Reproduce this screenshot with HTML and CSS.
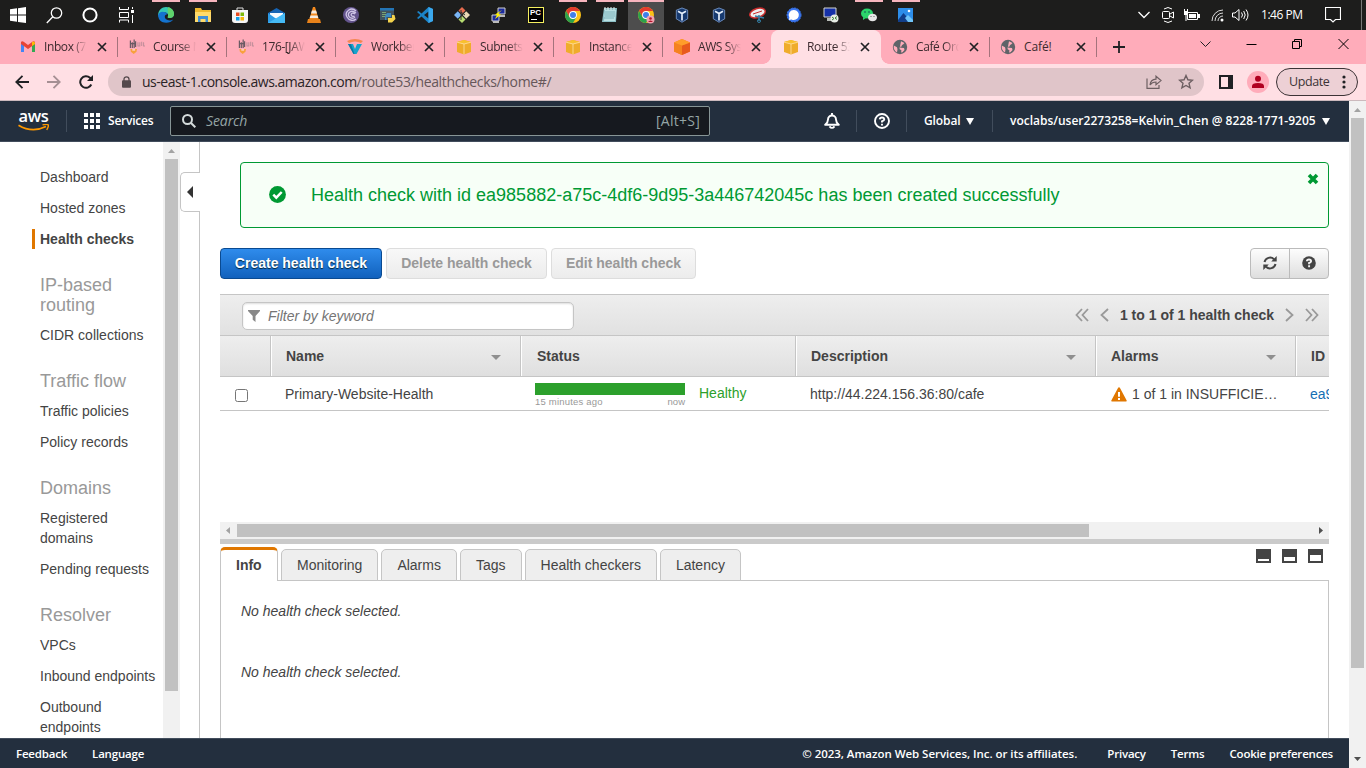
FILE: index.html
```html
<!DOCTYPE html>
<html lang="en">
<head>
<meta charset="utf-8">
<title>Route 53 Console</title>
<link rel="stylesheet" href="styles.css">
</head>
<body>
<svg class="defs" aria-hidden="true">
  <defs>
    <symbol id="cube" viewBox="0 0 16 16"><path d="M1 3 8 1l7 2v10L8 15.500 1 13z" fill="#efac2b"/><path d="M1 3 8 5l7-2L8 1z" fill="#f9c02d"/><path d="M1 3.200 8 5l7-1.800M8 5v10.500" stroke="#ffdc9a" stroke-width=".9" fill="none"/></symbol>
    <symbol id="globe" viewBox="0 0 16 16"><circle cx="8" cy="8" r="7.200" fill="#5f6368"/><path d="M9 2.300 12.500 4l-1.500 1.500-1 .5-.5 1.500-2.500.5 2 .7 3 .3.500 2-2 2.300-1.500.3.500-2-2-1.600zM1.800 6.500 5 8.300l.5 2-.5 3.200A7 7 0 0 1 1.800 6.500z" fill="#ffacba"/></symbol>
    <symbol id="x" viewBox="0 0 10 10"><path d="M1 1l8 8M9 1l-8 8" stroke="#202124" stroke-width="1.700"/></symbol>
    <symbol id="canvas" viewBox="0 0 17 16"><path d="M1.500 1v8M3.500 3v6M5.500 0v9M7 2v6M1 4.500h6" stroke="#6b5a63" stroke-width="1.300"/><path d="M9.500 3v4h2V3M13.500 2.500V7M15.500 3v4h1.500" stroke="#c08d99" stroke-width="1.100" fill="none"/><path d="M1.500 10h7l-.5 3-3 2.500-3-2.500z" fill="#f8a03c"/><path d="M3.500 10h3v2h-3z" fill="#ffc8bb"/></symbol>
    <symbol id="chrome" viewBox="0 0 16 16"><circle cx="8" cy="8" r="8" fill="#fbc116"/><path d="M1.100 4A8 8 0 0 1 15 4H8L4.600 10z" fill="#e33b2e"/><path d="M1.100 4A8 8 0 0 0 8 16l3.500-6L8 11.500 4.500 10z" fill="#2ba24c"/><circle cx="8" cy="8" r="3.900" fill="#fff"/><circle cx="8" cy="8" r="3" fill="#3f7fe8"/></symbol>
    <symbol id="vbox" viewBox="0 0 16 16"><path d="M2 3 8 .500 14 3v9l-6 3.700L2 12z" fill="#173a70"/><path d="M2.300 3.200 8 1l5.700 2.200v8.600L8 15.200l-5.700-3.400z" fill="none" stroke="#8fabd2" stroke-width=".7"/><path d="M4 4.300 8 6.500l4-2.200M8 6.500v7" stroke="#e5effb" stroke-width="1.700" fill="none"/></symbol>
  </defs>
</svg>

<header class="taskbar">
  <div class="start">
    <span><svg width="16" height="16"><path d="M0 2.300 7 1.300V7.500H0zM8 1.200 16 0v7.500H8zM0 8.500h7v6.200L0 13.700zM8 8.500h8V16L8 14.900z" fill="#fff"/></svg></span>
    <span><svg width="17" height="17" fill="none" stroke="#fff" stroke-width="1.300"><circle cx="10.500" cy="6" r="5.200"/><path d="M6.800 9.800.8 16"/></svg></span>
    <span><svg width="16" height="16"><circle cx="8" cy="8" r="6.600" fill="none" stroke="#fff" stroke-width="2"/></svg></span>
    <span><svg width="17" height="16" fill="none" stroke="#fff"><path d="M1.500 0v2.500h9V0M1.500 15.500v-2.500h9v2.500M1.500 5.500h9v5h-9zM14.500 0v2M14.500 8v8"/><path d="M13 3h3v3h-3z" fill="#fff" stroke="none"/></svg></span>
  </div>
  <div class="apps">
    <span class="open"><svg width="16" height="16"><path d="M0 9C0 3 4 0 8 0c5 0 8 3.500 8 7 0 3-2.500 4-4.500 4-2 0-2-.8-1.600-1.500C11 7 8.500 5 6 5.500 3 6 1 7.500 0 9z" fill="#36c6b4"/><path d="M10 .3C14 1 16 4 16 7c0 3-2.500 4-4.500 4-2 0-2-.8-1.600-1.500C11 7 9 5 10 .3z" fill="#60d36b"/><path d="M0 9c0-4 6-6 9.500-1.800C6 7 5 13 12 13.500c1.500 0 2.500-.4 3.300-.9C12 17 4 17 1 12z" fill="#1473cf"/></svg></span>
    <span class="open"><svg width="16" height="14"><path d="M0 0h6l1 2h9v12H0z" fill="#efb82f"/><path d="M0 4h16v10H0z" fill="#ffda6b"/><path d="M3 8h10v6h-2.500v-3h-5v3H3z" fill="#3f8fd8"/></svg></span>
    <span><svg width="16" height="16"><path d="M5 3V1h6v2" fill="none" stroke="#ddd"/><path d="M0 3h16v10q0 3-3 3H3q-3 0-3-3z" fill="#f5f5f5"/><path d="M4 5.500h3.500V9H4z" fill="#e84c22"/><path d="M8.500 5.500H12V9H8.500z" fill="#7cb908"/><path d="M4 10h3.500v3.500H4z" fill="#14a0e8"/><path d="M8.500 10H12v3.500H8.500z" fill="#f5b60b"/></svg></span>
    <span><svg width="17" height="15"><path d="M0 5 8.500 0 17 5v10H0z" fill="#1664b4"/><path d="M2 5h13v4l-6.500 2L2 9z" fill="#f5fafe"/><path d="M0 5l8.500 6L17 5v10H0z" fill="#2c9be6"/><path d="M0 15 17 5v10z" fill="#45baf5"/></svg></span>
    <span><svg width="14" height="16"><path d="M6 0h2l4 13H2z" fill="#f58a1d"/><path d="M5 3.500h4l1 3H4zM3.500 8.500h7l.8 2.500H2.700z" fill="#f7ece0"/><path d="M1 12h12l1 4H0z" fill="#e8821a"/></svg></span>
    <span><svg width="16" height="16"><circle cx="8" cy="8" r="8" fill="#63548c"/><path d="M13 4C8-1 1 5 4 10c2 4 7 4 9 2M13 6C8 2 4 6 6 9.500c1.500 2.500 5 2 6 .5M12 7C9 5 7.500 7 8.500 8.700c.8 1 2.500.8 3 .1" fill="none" stroke="#cfc6e6" stroke-width="1.300"/></svg></span>
    <span><svg width="16" height="16"><path d="M0 1h14v12H0z" fill="#41525e"/><path d="M0 1h14v2.500H0z" fill="#2475b5"/><path d="M2 5.500h4M2 7.500h6M2 9.500h4" stroke="#79a574"/><path d="M7 6h4v4H6.500V13H5V9z" fill="#3d87be"/><path d="M12 8h2.500l1 4-3.500 3.500H8V11h4z" fill="#f4d34c"/></svg></span>
    <span><svg width="16" height="16"><path d="M11.500 0 16 2v12l-4.500 2L4.500 9.500 1.500 12 0 11l3.300-3L0 5l1.500-1 3 2.500z" fill="#1b83c7"/><path d="M11.500 4.500 7 8l4.500 3.500z" fill="#1c1c1c"/><path d="M11.500 0 16 2v12l-4.500 2z" fill="#3ba8ed"/></svg></span>
    <span><svg width="16" height="16"><path d="M8 0l3.500 3.500L8 7 4.500 3.500z" fill="#e56b4e"/><path d="M3.800 4.200 7.300 8l-3.500 3.700L0 8z" fill="#7bb6f5"/><path d="M12.200 4.200 16 8l-3.800 3.700L8.700 8z" fill="#e9d8b5"/><path d="M8 9l3.500 3.500L8 16l-3.500-3.500z" fill="#b7dd71"/><path d="M7 3v10M7 5l4 3" stroke="#333" fill="none"/></svg></span>
    <span><svg width="16" height="16"><path d="M7 1h7v6H7zM1 8h7v6H1z" fill="#1d2c9e" stroke="#cfcfcf"/><path d="M8 8h6v2H8zM2 14h6v2H2z" fill="#bbb"/><path d="M11 3 7 7l3 .5L4 12l2-4-2-.5z" fill="#fff200"/></svg></span>
    <span><span class="pycharm">PC</span></span>
    <span class="open"><svg width="16" height="16"><use href="#chrome"/></svg></span>
    <span class="open"><svg width="16" height="16"><path d="M2 1h13l-1 14H0z" fill="#8dbfc6"/><path d="M3 3h11l-1 11H2z" fill="#b9e0e2"/><path d="M3 5h10M3 7h10M3 9h10M2 11h10" stroke="#659fab" stroke-width=".7"/><path d="M3 0v3M6 0v3M9 0v3M12 0v3" stroke="#e9ece9"/></svg></span>
    <span class="open active"><svg width="17" height="17"><use href="#chrome" width="16" height="16"/><circle cx="12.500" cy="12.500" r="4" fill="#f1a1ae"/><circle cx="12.500" cy="11.500" r="1.300" fill="#b3132b"/><path d="M10 15q2.500-3 5 0z" fill="#b3132b"/></svg></span>
    <span class="vb"><svg width="16" height="16"><use href="#vbox"/></svg></span>
    <span class="vb"><svg width="16" height="16"><use href="#vbox"/></svg></span>
    <span><svg width="17" height="16"><ellipse cx="8.500" cy="6" rx="8" ry="4.500" transform="rotate(-18 8.500 6)" fill="#efeeee" stroke="#c92d2d" stroke-width="1.500"/><path d="M4 7l9-3" stroke="#c92d2d"/><path d="M6 9l9 2M10 8v6" stroke="#347fa5" stroke-width="1.500"/><circle cx="10" cy="14" r="1.500" fill="none" stroke="#347fa5"/></svg></span>
    <span class="sg"><svg width="16" height="16"><circle cx="8" cy="8" r="7" fill="#3a76f0" stroke="#3a76f0" stroke-dasharray="2 1"/><path d="M8 3a5 5 0 1 1-2.500 9.400L2.800 13l.6-2.600A5 5 0 0 1 8 3z" fill="#fff"/></svg></span>
    <span class="sg"><svg width="16" height="16"><path d="M1 1h12v9H1z" fill="#1631a8" stroke="#d4d6cf"/><path d="M4 11h5v3H4z" fill="#b9bdb8"/><circle cx="11.500" cy="11.500" r="4" fill="#e8ece5"/><path d="M9 10l2 1.500L9 13M14 9.500l-2 1.500 2 1.500" stroke="#37823a" fill="none"/></svg></span>
    <span class="open"><svg width="16" height="14"><ellipse cx="6" cy="5.500" rx="6" ry="5" fill="#2bd46b"/><path d="M2 9v3l3-2z" fill="#2bd46b"/><ellipse cx="11.500" cy="9.500" rx="4.500" ry="3.800" fill="#e7e7e7"/><circle cx="4" cy="4" r=".8" fill="#145"/><circle cx="8" cy="4" r=".8" fill="#145"/><circle cx="10" cy="8.500" r=".6" fill="#555"/><circle cx="13" cy="8.500" r=".6" fill="#555"/></svg></span>
    <span class="open"><svg width="15" height="14"><path d="M0 0h15v14H0z" fill="#2d8eea"/><path d="M0 12 5.500 5 13 14H0z" fill="#123f8a"/><path d="M7 10l3-3 5 5v2h-5z" fill="#70c5fa"/><circle cx="11" cy="3" r="1.300" fill="#fff"/></svg></span>
  </div>
  <div class="tray">
    <svg width="12" height="8"><path d="M.5 1 6 6.500 11.500 1" fill="none" stroke="#fff" stroke-width="1.300"/></svg>
    <svg width="12" height="16" fill="none" stroke="#fff"><path d="M2 2q4-3 8 0M2 14q4 3 8 0"/><rect x=".5" y="4.500" width="7" height="7" rx="1"/><path d="M8 7l3.500-2v6L8 9" /></svg>
    <svg width="17" height="13"><path d="M4.500 3.500h10v7h-10z" fill="none" stroke="#fff"/><path d="M6 5h7v4H6zM15 5h2v4h-2zM1 2h4v4H1zM1 0h1v2H1zM4 0h1v2H4zM2.500 6h1v6h-1z" fill="#fff"/></svg>
    <svg width="13" height="13" fill="none" stroke="#d8d8d8"><path d="M1 12A11 11 0 0 1 12 1M4 12a8 8 0 0 1 8-8M7 12a5 5 0 0 1 5-5"/><circle cx="11" cy="11" r="1.500" fill="#fff" stroke="none"/></svg>
    <svg width="17" height="14" fill="none" stroke="#fff"><path d="M.5 5h2.500L7 1.500v11L3 9H.5zM9.500 4.500q2 2.500 0 5M11.700 3q3 4 0 8M14 1.500q4 5.500 0 11"/></svg>
    <span class="clock">1:46 PM</span>
    <svg class="note" width="16" height="16"><path d="M.5.500h15v12h-5L8 15l-2.500-2.500h-5z" fill="none" stroke="#fff" stroke-width="1.200"/></svg>
    <i class="peek"></i>
  </div>
</header>

<nav class="tabstrip">
  <div class="tab"><svg width="16" height="16"><path d="M1 13V3l3 2v8z" fill="#4385f4"/><path d="M12 5l3-2v10h-3z" fill="#34a853"/><path d="M1 3q1-1.500 3 0l4 3 4-3q2-1.500 3 0v2L8 10 1 5z" fill="#e94335"/><path d="M12 3q3-1.500 3 2l-3 2z" fill="#fbbc04"/></svg><b>Inbox (7</b><svg class="close"><use href="#x"/></svg></div>
  <div class="tab"><svg width="17" height="16"><use href="#canvas"/></svg><b>Course M</b><svg class="close"><use href="#x"/></svg></div>
  <div class="tab"><svg width="17" height="16"><use href="#canvas"/></svg><b>176-[JAW</b><svg class="close"><use href="#x"/></svg></div>
  <div class="tab"><svg width="16" height="16"><path d="M0 2q8-4 16 0l-2 2q-6-3-12 0z" fill="#f58550"/><path d="M1 5h5l2 5 2-5h5L9.500 15h-3z" fill="#18a3cc"/><path d="M1 5h3l3.500 10h-1z" fill="#0b78a5"/></svg><b>Workben</b><svg class="close"><use href="#x"/></svg></div>
  <div class="tab"><svg width="16" height="16"><use href="#cube"/></svg><b>Subnets</b><svg class="close"><use href="#x"/></svg></div>
  <div class="tab"><svg width="16" height="16"><use href="#cube"/></svg><b>Instance</b><svg class="close"><use href="#x"/></svg></div>
  <div class="tab last"><svg width="16" height="16"><path d="M0 3.500 8 0l8 3.500v9L8 16l-8-3.500z" fill="#f58220"/><path d="M0 3.500 8 6.500V16l-8-3.500z" fill="#f58220"/><path d="M8 6.500l8-3v9L8 16z" fill="#e8591c"/><path d="M0 3.500 8 0l8 3.500-8 3z" fill="#ff9d2a"/></svg><b>AWS Sys</b><svg class="close"><use href="#x"/></svg></div>
  <div class="tab current"><svg width="16" height="16"><use href="#cube"/></svg><b>Route 53</b><svg class="close"><use href="#x"/></svg></div>
  <div class="tab"><svg width="16" height="16"><use href="#globe"/></svg><b>Café Ord</b><svg class="close"><use href="#x"/></svg></div>
  <div class="tab"><svg width="16" height="16"><use href="#globe"/></svg><b>Café!</b><svg class="close"><use href="#x"/></svg></div>
  <svg class="plus" width="12" height="12"><path d="M6 0v12M0 6h12" stroke="#202124" stroke-width="1.800"/></svg>
  <div class="winctl">
    <svg width="11" height="12"><path d="M.5 3.500l5 5 5-5" fill="none" stroke="#202124"/></svg>
    <svg width="11" height="12"><path d="M.5 6.500h10" stroke="#000"/></svg>
    <svg width="11" height="12" fill="none" stroke="#000"><path d="M.5 3.500h7v7h-7zM2.500 3.500v-2h7v7h-2"/></svg>
    <svg width="11" height="12"><path d="M.5 1l10 10M10.500 1l-10 10" stroke="#000"/></svg>
  </div>
</nav>

<div class="toolbar">
  <svg width="14" height="14" fill="none" stroke="#202124" stroke-width="1.800"><path d="M14 7H1.500M7.500.8 1.300 7l6.200 6.200"/></svg>
  <svg width="14" height="14" fill="none" stroke="#a58f93" stroke-width="1.800"><path d="M0 7h12.500M6.500.8 12.700 7l-6.200 6.200"/></svg>
  <svg width="14" height="14"><path d="M12.300 9.500A5.800 5.800 0 1 1 11 2.800L13 4.800" fill="none" stroke="#202124" stroke-width="2"/><path d="M14 0v6H8z" fill="#202124"/></svg>
  <div class="omnibox">
    <svg width="9" height="12"><path d="M2 5V3.300a2.500 2.500 0 0 1 5 0V5" fill="none" stroke="#54494c" stroke-width="1.300"/><rect y="4.300" width="9" height="7.500" rx="1" fill="#54494c"/></svg>
    <p class="url"><span class="host">us-east-1.console.aws.amazon.com</span><span class="path">/route53/healthchecks/home#/</span></p>
    <svg class="share" width="16" height="14" fill="none" stroke="#6d5f62" stroke-width="1.200"><path d="M1 3.500v9.800h12V10"/><path d="M4 10q.5-5.500 6-5.800V1.200l5 4.400-5 4.200V7Q6 7 4 10z"/></svg>
    <svg width="16" height="16"><path d="M8 1.500l1.900 4.300 4.600.4-3.500 3.100 1.100 4.600L8 11.500l-4.100 2.400L5 9.300 1.500 6.200l4.600-.4z" fill="none" stroke="#6d5f62" stroke-width="1.400"/></svg>
  </div>
  <svg class="panel-ico" width="14" height="14"><path d="M1 1h12v12H1z" fill="none" stroke="#202124" stroke-width="2"/><path d="M9 1h4v12H9z" fill="#202124"/></svg>
  <svg class="avatar" width="22" height="22"><circle cx="11" cy="11" r="11" fill="#ffacba"/><circle cx="11" cy="7.800" r="3" fill="#b00020"/><path d="M5 17v-2q0-3 6-3t6 3v2z" fill="#b00020"/></svg>
  <div class="update"><span>Update</span><svg width="4" height="14" fill="#202124"><circle cx="2" cy="2" r="1.600"/><circle cx="2" cy="7" r="1.600"/><circle cx="2" cy="12" r="1.600"/></svg></div>
</div>

<div class="viewport">
  <div class="page">
    <header class="awsnav">
      <div class="logo"><span>aws</span><svg width="31" height="9"><path d="M.5 1.200Q14 9.500 28 2.600" fill="none" stroke="#f90" stroke-width="1.700"/><path d="M24.500.900q5-1 5.800.1.500 1.400-1.600 5" fill="none" stroke="#f90" stroke-width="1.400"/></svg></div>
      <i class="div"></i>
      <svg class="grid-ico" width="16" height="16" fill="#fff"><path d="M0 0h4v4H0zM6 0h4v4H6zM12 0h4v4h-4zM0 6h4v4H0zM6 6h4v4H6zM12 6h4v4h-4zM0 12h4v4H0zM6 12h4v4H6zM12 12h4v4h-4z"/></svg>
      <span class="services">Services</span>
      <div class="search"><svg width="14" height="14" fill="none" stroke="#d5dbdb" stroke-width="2"><circle cx="5.500" cy="5.500" r="4.500"/><path d="M8.800 8.800 13.300 13.300"/></svg><em>Search</em><kbd>[Alt+S]</kbd></div>
      <svg class="bell" width="16" height="16" fill="none" stroke="#fff" stroke-width="1.900"><path d="M8 0v2M1.200 11.800h13.600Q12 9.500 12 6.500a4 4 0 0 0-8 0Q4 9.500 1.200 11.800z" stroke-linejoin="round"/><path d="M5.500 13.300q2.500 3.200 5 0"/></svg>
      <i class="div d2"></i>
      <svg class="help" width="16" height="16" fill="none" stroke="#fff" stroke-width="1.900"><circle cx="8" cy="8" r="7"/><path d="M5.700 6.300Q6 4.500 8 4.500t2.300 1.700Q10.300 7.500 8 8.300v1.200M8 10.800v1.600"/></svg>
      <i class="div d3"></i>
      <span class="region">Global</span><i class="caret"></i>
      <i class="div d4"></i>
      <span class="account">voclabs/user2273258=Kelvin_Chen @ 8228-1771-9205</span><i class="caret c2"></i>
    </header>

    <div class="body">
      <aside class="side">
        <ul>
          <li>Dashboard</li><li>Hosted zones</li><li class="sel">Health checks</li>
          <li class="hd">IP-based routing</li><li>CIDR collections</li>
          <li class="hd">Traffic flow</li><li>Traffic policies</li><li>Policy records</li>
          <li class="hd">Domains</li><li>Registered domains</li><li>Pending requests</li>
          <li class="hd">Resolver</li><li>VPCs</li><li class="nowrap">Inbound endpoints</li><li>Outbound endpoints</li>
        </ul>
      </aside>
      <div class="sidebar-scroll"><svg width="7" height="4"><path d="M0 4 3.500 0 7 4z" fill="#a3a3a3"/></svg><i></i></div>
      <div class="rail"><div class="handle"><svg width="6" height="12"><path d="M6 0v12L0 6z" fill="#333"/></svg></div></div>

      <main class="main">
        <div class="alert">
          <svg width="17" height="17"><circle cx="8.500" cy="8.500" r="8.400" fill="#093"/><path d="M4.300 8.600l3 3 5.400-5.600" fill="none" stroke="#fff" stroke-width="2.500"/></svg>
          <p>Health check with id ea985882-a75c-4df6-9d95-3a446742045c has been created successfully</p>
          <svg class="dismiss" width="12" height="12"><path d="M2 2l8 8M10 2l-8 8" stroke="#093" stroke-width="3.600"/></svg>
        </div>
        <div class="actions">
          <button class="btn primary">Create health check</button><button class="btn off">Delete health check</button><button class="btn off edit">Edit health check</button>
          <div class="pair">
            <span><svg width="14" height="14" fill="none" stroke="#444" stroke-width="2"><path d="M1.500 6A5.700 5.700 0 0 1 11 3.200M12.500 8A5.700 5.700 0 0 1 3 10.800"/><path d="M13.700 0v5.500H8.200zM.3 14V8.500h5.500z" fill="#444" stroke="none"/></svg></span>
            <span><svg width="14" height="14"><circle cx="7" cy="7" r="6.800" fill="#444"/><path d="M4.900 5.300Q5 3.500 7 3.500t2.100 1.700Q9.100 6.300 7.100 7v1.300M7.100 9.300v2" fill="none" stroke="#f4f4f4" stroke-width="1.900"/></svg></span>
          </div>
        </div>

        <section class="table">
          <div class="tbar">
            <div class="filter"><svg width="12" height="12"><path d="M0 0h12v1L7.500 6v6L4.700 9.800V6L0 1z" fill="#888"/></svg><em>Filter by keyword</em></div>
            <div class="pager">
              <svg width="14" height="14" fill="none" stroke="#999" stroke-width="1.800"><path d="M7 1 1.500 7 7 13M13 1 7.500 7l5.500 6"/></svg>
              <svg width="9" height="14" fill="none" stroke="#999" stroke-width="1.800"><path d="M8 1 1.500 7 8 13"/></svg>
              <b>1 to 1 of 1 health check</b>
              <svg width="9" height="14" fill="none" stroke="#999" stroke-width="1.800"><path d="M1 1l6.500 6L1 13"/></svg>
              <svg width="14" height="14" fill="none" stroke="#999" stroke-width="1.800"><path d="M1 1l5.500 6L1 13M7 1l5.500 6L7 13"/></svg>
            </div>
          </div>
          <div class="row head">
            <span></span><span>Name<i></i></span><span class="hstat">Status</span><span>Description<i></i></span><span>Alarms<i></i></span><span>ID</span>
          </div>
          <div class="row data">
            <span><i class="check"></i></span><span>Primary-Website-Health</span>
            <span class="status"><span class="spark"><i></i><small><u>15 minutes ago</u><u>now</u></small></span><strong>Healthy</strong></span>
            <span>http://44.224.156.36:80/cafe</span>
            <span class="alarm"><svg width="16" height="15"><path d="M8 .3q.7 0 1 .6l6.700 12.500q.3 1-.7 1H1q-1 0-.7-1L7 .9Q7.300.3 8 .3z" fill="#e07700"/><path d="M8 5v4.700M8 11v2" stroke="#fff" stroke-width="2"/></svg>1 of 1 in INSUFFICIE…</span>
            <span class="link">ea985882</span>
          </div>
        </section>

        <div class="hscroll"><svg width="4" height="7"><path d="M4 0v7L0 3.500z" fill="#a3a3a3"/></svg><i></i><svg width="4" height="7"><path d="M0 0v7l4-3.500z" fill="#505050"/></svg></div>
        <div class="splitter"></div>
        <div class="tabs">
          <span class="on">Info</span><span>Monitoring</span><span>Alarms</span><span>Tags</span><span>Health checkers</span><span>Latency</span>
          <div class="sizes"><i class="s1"></i><i class="s2"></i><i class="s3"></i></div>
        </div>
        <section class="detail"><p>No health check selected.</p><p>No health check selected.</p></section>
      </main>
    </div>

    <footer class="foot"><span class="f1">Feedback</span><span class="f2">Language</span><span class="f3">© 2023, Amazon Web Services, Inc. or its affiliates.</span><span class="f4">Privacy</span><span class="f5">Terms</span><span class="f6">Cookie preferences</span></footer>
  </div>
  <div class="vscroll"><svg width="7" height="4"><path d="M0 4 3.500 0 7 4z" fill="#a3a3a3"/></svg><i></i><svg class="dn" width="7" height="4"><path d="M0 0h7L3.500 4z" fill="#505050"/></svg></div>
</div>
</body>
</html>
```
FILE: styles.css
```css
* { box-sizing: border-box; }
html, body { margin: 0; height: 100%; }
body { width: 1366px; height: 768px; overflow: hidden; display: flex; flex-direction: column; background: #fff; font: 14px/20px "Liberation Sans", Arial, sans-serif; color: #444; }
svg { display: block; flex: none; }
p, ul { margin: 0; padding: 0; list-style: none; }
.defs { position: absolute; width: 0; height: 0; }

/* taskbar */
.taskbar { height: 30px; flex: none; background: #1d1d1c; display: flex; }
.start { display: flex; width: 147px; }
.start > span { width: 36px; display: grid; place-items: center; }
.apps { display: flex; width: 777px; }
.apps > span { width: 37px; display: grid; place-items: center; }
.apps > .vb { padding-right: 4px; }
.apps > .sg { padding-right: 2px; }
.apps > .open { background: linear-gradient(#f7b5be, #f7b5be) center top / 28px 2px no-repeat; }
.apps > .active { background: linear-gradient(#f7b5be, #f7b5be) left top / 36px 2px no-repeat, linear-gradient(90deg, #4d4d4d 36px, transparent 36px); }
.pycharm { width: 16px; height: 16px; border: 1px solid #f5ef5f; background: #000; color: #fff; font: bold 8px/9px "Liberation Sans", sans-serif; text-align: center; background-image: linear-gradient(#fff, #fff); background-size: 6px 1px; background-position: 2px 11px; background-repeat: no-repeat; }
.tray { flex: 1; display: flex; align-items: center; padding-left: 214px; }
.tray svg:nth-child(2) { margin-left: 12px; }
.tray svg:nth-child(3) { margin-left: 9px; }
.tray svg:nth-child(4) { margin-left: 11px; }
.tray svg:nth-child(5) { margin-left: 8px; }
.clock { margin-left: 12px; width: 44px; color: #fff; font: 12px/20px "Open Sans", sans-serif; letter-spacing: -.45px; white-space: nowrap; }
.tray .note { margin-left: 20px; }
.peek { margin-left: 20px; width: 1px; height: 30px; background: #777; }

/* tab strip */
.tabstrip { height: 34px; flex: none; background: #ffacba; display: flex; align-items: center; padding-left: 9px; }
.tab { width: 109px; height: 34px; flex: none; display: flex; align-items: center; padding-left: 11px; background: linear-gradient(#a5737c, #a5737c) right center / 1px 20px no-repeat; }
.tab.last { background: none; }
.tab > svg:first-child { width: 16px; margin-right: 8px; }
.tab > b { width: 43px; flex: none; white-space: nowrap; font: 12px/20px "Open Sans", sans-serif; letter-spacing: -.4px; color: #3c2a2e; -webkit-mask-image: linear-gradient(90deg, #000 65%, transparent); mask-image: linear-gradient(90deg, #000 65%, transparent); }
.tab:nth-child(10) > b { -webkit-mask-image: none; mask-image: none; letter-spacing: -.1px; }
.tab:nth-child(10) { width: 107px; padding-left: 10px; }
.tab:nth-child(10) > .close { margin-left: 9px; }
.close { width: 10px; height: 10px; margin-left: 10px; }
.tab.current { background: #ffdfe4; border-radius: 8px 8px 0 0; box-shadow: -1px 0 #ffdfe4; position: relative; }
.tab.current::before, .tab.current::after { content: ""; position: absolute; bottom: 0; width: 8px; height: 8px; }
.tab.current::before { left: -9px; background: radial-gradient(circle at 0 0, transparent 7.5px, #ffdfe4 8px); }
.tab.current::after { right: -8px; background: radial-gradient(circle at 100% 0, transparent 7.5px, #ffdfe4 8px); }
.plus { margin-left: 16px; }
.winctl { display: flex; gap: 35px; margin-left: 75px; padding-bottom: 6px; }

/* browser toolbar */
.toolbar { height: 37px; flex: none; background: #ffdfe4; border-bottom: 1px solid #ccb9bd; display: flex; align-items: center; padding-left: 15px; }
.toolbar > svg:nth-child(2) { margin-left: 18px; }
.toolbar > svg:nth-child(3) { margin-left: 18px; }
.omnibox { margin-left: 15px; width: 1096px; height: 28px; border-radius: 14px; background: #e0c5c9; display: flex; align-items: center; padding-left: 14px; }
.url { margin-left: 11px; font: 14px/20px "Open Sans", sans-serif; white-space: nowrap; }
.host { letter-spacing: -.48px; color: #2b2326; }
.path { color: #66575a; letter-spacing: -.34px; }
.share { margin-left: auto; margin-right: 16px; }
.omnibox > svg:last-child { margin-right: 10px; }
.panel-ico { margin-left: 15px; }
.avatar { margin-left: 14px; }
.update { margin-left: 7px; width: 82px; height: 28px; border: 1px solid #3c3336; border-radius: 14px; background: #edd0d5; display: flex; align-items: center; padding-left: 12px; font: 12.500px/20px "Open Sans", sans-serif; color: #3c3336; letter-spacing: -.6px; }
.update { letter-spacing: -.4px; }
.update svg { margin-left: auto; margin-right: 11px; }

/* viewport */
.viewport { flex: 1; min-height: 0; display: flex; }
.page { width: 1349px; display: flex; flex-direction: column; }
.vscroll { width: 17px; background: #f1f1f1; display: flex; flex-direction: column; align-items: center; padding-top: 7px; }
.vscroll i { width: 13px; height: 550px; background: #c1c1c1; margin-top: 6px; }
.vscroll .dn { margin-top: 89px; }

/* console nav */
.awsnav { height: 41px; flex: none; background: #232f3e; border-bottom: 1px solid #414d5c; display: flex; align-items: center; color: #fff; font: 600 12px/20px "Open Sans", sans-serif; white-space: nowrap; }
.logo { width: 31px; margin-left: 18px; height: 22px; }
.logo span { display: block; height: 14px; font: 600 16.500px/12px "Open Sans", sans-serif; letter-spacing: -.4px; text-align: center; }
.div { width: 1px; height: 22px; background: #414d5c; margin-left: 17px; }
.grid-ico { margin-left: 17px; }
.services { margin-left: 8px; width: 62px; letter-spacing: -.22px; }
.search { width: 540px; height: 30px; background: #16191f; border: 1px solid #879596; border-radius: 2px; display: flex; align-items: center; padding: 0 9px 0 11px; font-weight: 400; font-size: 14px; color: #95a5a6; }
.search em { margin-left: 10px; letter-spacing: -.1px; }
.search kbd { margin-left: auto; font: 14px/20px "Open Sans", sans-serif; letter-spacing: .25px; }
.bell { margin-left: 114px; }
.d2 { margin-left: 16px; }
.help { margin-left: 17px; }
.d3 { margin-left: 16px; }
.region { margin-left: 17px; width: 36px; letter-spacing: -.1px; }
.caret { margin-left: 6px; border: 4px solid transparent; border-top: 7px solid #fff; border-bottom: 0; }
.d4 { margin-left: 18px; }
.account { margin-left: 17px; width: 306px; }
.c2 { margin-left: 6px; }

/* body */
.body { flex: 1; min-height: 0; display: flex; }
.side { width: 163px; overflow: hidden; padding: 25px 0 0 32px; }
.side li { padding-left: 8px; margin-bottom: 11px; width: 120px; }
.side .sel { font-weight: bold; box-shadow: inset 3px 0 #e07700; }
.side .hd { font-size: 18px; color: #999; margin: 26px 0 10px; }
.side li:has(+ .hd) { margin-bottom: 0; }
.side .nowrap { white-space: nowrap; }
.sidebar-scroll { width: 17px; background: #f1f1f1; display: flex; flex-direction: column; align-items: center; padding-top: 7px; }
.sidebar-scroll i { width: 13px; height: 532px; background: #c1c1c1; margin-top: 6px; }
.rail { width: 20px; padding-top: 30px; background: linear-gradient(#c5c5c5, #c5c5c5) right top / 1px 100% no-repeat; }
.handle { height: 40px; border: 1px solid #c5c5c5; border-right: 0; border-radius: 5px 0 0 5px; background: #fff; display: flex; align-items: center; padding-left: 6px; }
.main { width: 1129px; padding: 20px 0 0 20px; display: flex; flex-direction: column; }
.alert { height: 66px; flex: none; margin-left: 20px; border: 1px solid #093; border-radius: 4px; background: #f7fff7; display: flex; align-items: center; padding: 0 9px 0 28px; }
.alert > svg:first-child { margin-bottom: 2px; }
.alert p { font-size: 18px; color: #093; margin-left: 25px; white-space: nowrap; }
.dismiss { margin-left: auto; margin-bottom: 33px; }
.actions { display: flex; gap: 4px; height: 31px; margin-top: 20px; flex: none; }
.btn { font: bold 14px/20px "Liberation Sans", sans-serif; border-radius: 4px; padding: 0 0 2px; height: 31px; width: 162px; }
.primary { color: #fff; border: 1px solid #0a4a91; background: linear-gradient(#2f8cec, #1161bd); text-shadow: 0 1px 1px #023; }
.off { width: 161px; color: #999; border: 1px solid #ddd; background: linear-gradient(#f8f8f8, #ececec); }
.edit { width: 145px; }
.pair { margin-left: auto; width: 79px; border: 1px solid #bbb; border-radius: 4px; background: linear-gradient(#fdfdfd, #dedede); display: grid; grid-template-columns: 38px 1fr; }
.pair span { display: grid; place-items: center; padding-bottom: 2px; }
.pair span + span { border-left: 1px solid #bbb; padding-right: 1px; }

.table { margin-top: 15px; height: 228px; flex: none; overflow: hidden; }
.tbar { height: 42px; border: solid #c5c5c5; border-width: 1px 0; background: linear-gradient(#eee, #e1e1e1); display: flex; align-items: center; padding: 0 10px 0 22px; }
.filter { width: 332px; height: 28px; margin-top: 2px; background: #fff; border: 1px solid #c5c5c5; border-radius: 5px; box-shadow: inset 0 1px 2px #ddd; display: flex; align-items: center; padding-left: 5px; }
.filter em { margin-left: 8px; color: #757575; }
.pager { margin-left: auto; display: flex; align-items: center; }
.pager svg:nth-child(2) { margin-left: 11px; }
.pager b { margin: 0 11px; white-space: nowrap; }
.pager svg:last-child { margin-left: 11px; }
.row { display: grid; grid-template-columns: 51px 250px 275px 300px 200px 220px; white-space: nowrap; }
.row > span { padding-left: 15px; }
.row > .hstat { padding-left: 16px; }
.head { height: 41px; background: linear-gradient(#eee, #dfdfdf); border-bottom: 1px solid #c5c5c5; font-weight: bold; line-height: 40px; }
.head > span { display: flex; align-items: center; justify-content: space-between; padding-right: 20px; border-right: 1px solid #c5c5c5; box-shadow: inset 1px 0 #fff; }
.head > span:first-child { box-shadow: none; }
.head i { border: 5px solid transparent; border-top-color: #8f8f8f; border-bottom: 0; margin-top: 2px; margin-right: -1px; }
.data { height: 34px; border-bottom: 1px solid #c5c5c5; line-height: 34px; }
.data > span { padding-left: 14px; }
.check { display: block; width: 13px; height: 13px; border: 1px solid #767676; border-radius: 2.500px; margin: 12px 0 0 1px; background: #fff; }
.status { display: flex; }
.spark { width: 150px; margin-top: 6px; }
.spark i { display: block; height: 12px; background: #2ca02c; }
.spark small { display: flex; justify-content: space-between; font-size: 9.500px; line-height: 13px; color: #999; }
.spark u { text-decoration: none; }
.spark u:first-child { letter-spacing: .2px; }
.status strong { font-weight: normal; color: #2ca02c; margin-left: 14px; line-height: 32px; }
.alarm { display: flex; align-items: center; }
.alarm svg { margin: 1px 5px 0 1px; }
.link { color: #146eb4; }

.hscroll { height: 17px; flex: none; background: #f1f1f1; display: flex; align-items: center; padding: 0 6px; }
.hscroll i { width: 852px; height: 13px; background: #c1c1c1; margin: 0 auto 0 7px; }
.splitter { height: 5px; flex: none; background: #cacaca; }
.tabs { height: 37px; flex: none; display: flex; align-items: flex-end; gap: 3px; position: relative; z-index: 1; }
.tabs > span { height: 32px; line-height: 31px; padding: 0 15px; border: 1px solid #c5c5c5; border-radius: 5px 5px 0 0; background: #eee; }
.tabs > .on { width: 58px; height: 34px; line-height: 31px; font-weight: bold; background: #fff; border-top: 3px solid #e07700; border-bottom: 0; }
.sizes { display: flex; gap: 11px; margin: 0 6px 18px auto; }
.sizes i { width: 15px; height: 14px; border: 2px solid #444; background: #fff; }
.sizes .s1 { border-top-width: 10px; }
.sizes .s2 { border-top-width: 8px; }
.sizes .s3 { border-top-width: 6px; }
.detail { flex: 1; margin-top: -1px; border: 1px solid #c5c5c5; border-bottom: 0; padding: 20px; font-style: italic; }
.detail p + p { margin-top: 41px; }

.foot { height: 30px; flex: none; background: #232f3e; border-top: 1px solid #414d5c; display: flex; align-items: center; color: #fff; font: 600 11.500px/20px "Open Sans", sans-serif; letter-spacing: -.2px; padding: 1px 16px 0; white-space: nowrap; }
.f2 { margin-left: 25px; }
.foot .f3 { margin-left: auto; letter-spacing: -.04px; }
.f4 { margin-left: 30px; }
.f5, .f6 { margin-left: 25px; }
```
